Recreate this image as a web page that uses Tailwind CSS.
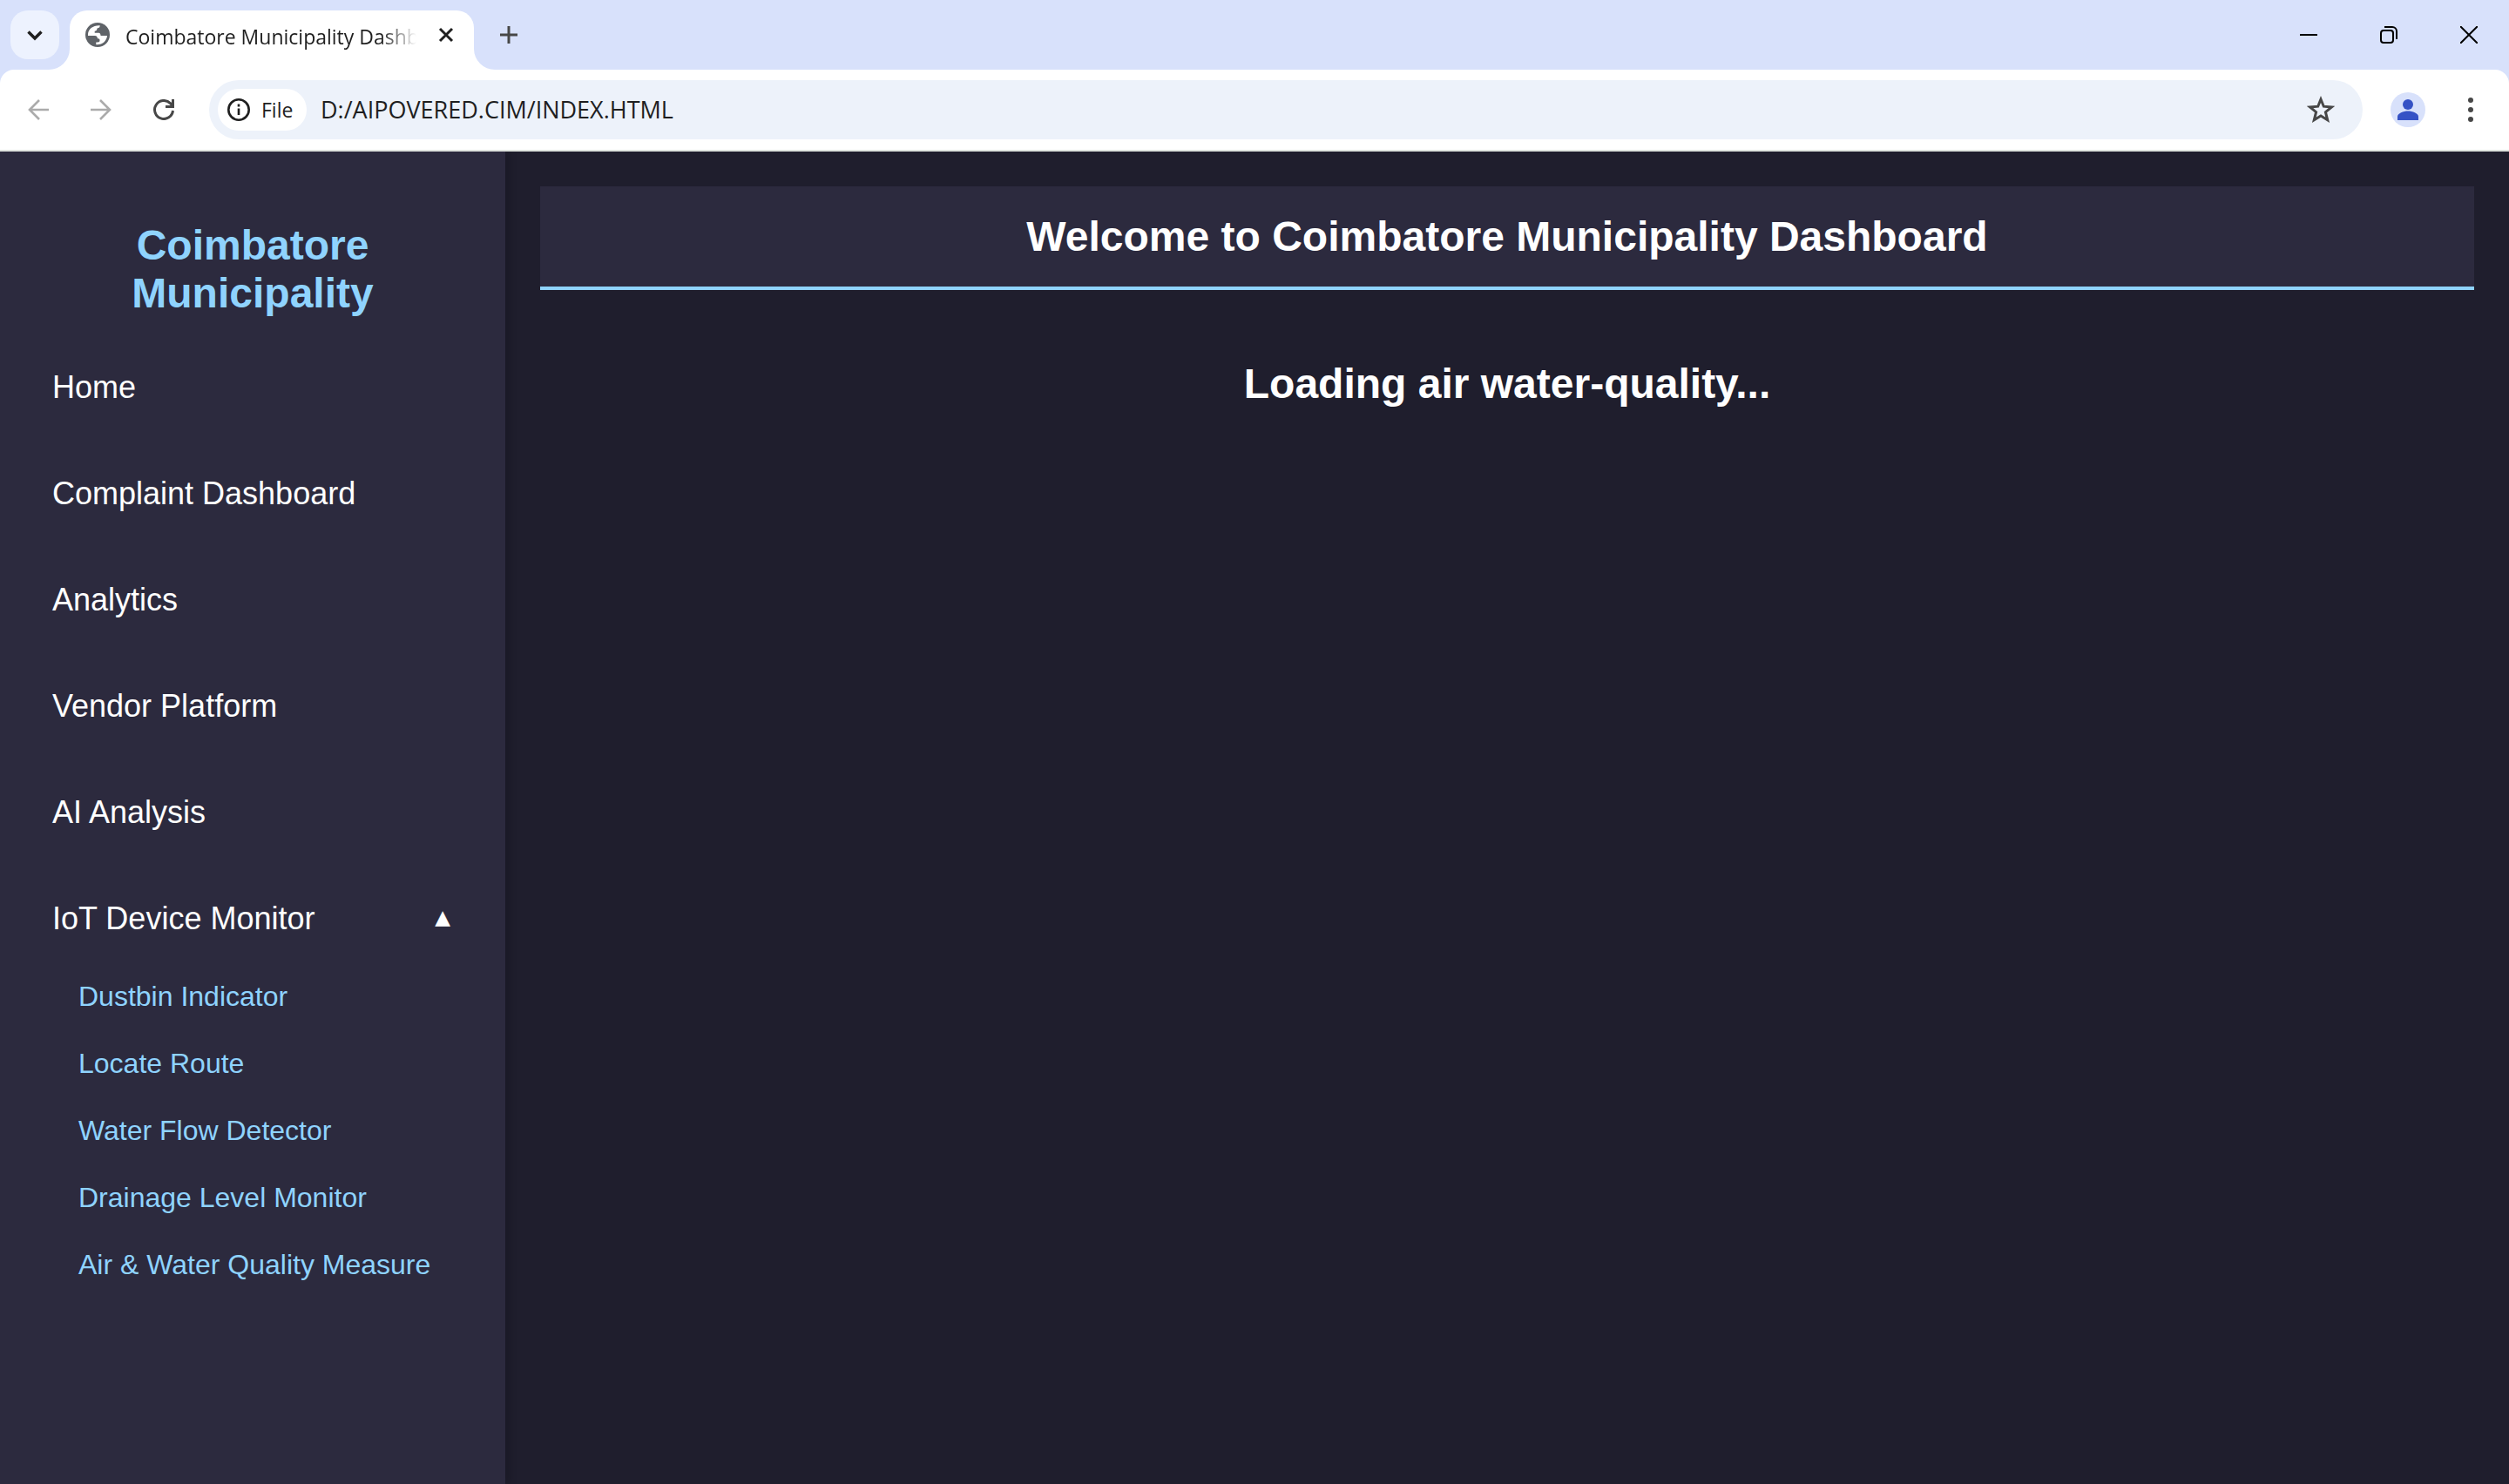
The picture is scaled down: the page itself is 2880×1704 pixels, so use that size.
<!DOCTYPE html>
<html lang="en">
<head>
<meta charset="utf-8">
<meta name="viewport" content="width=device-width, initial-scale=1">
<title>Coimbatore Municipality Dashboard</title>
<script src="https://cdn.jsdelivr.net/npm/@tailwindcss/browser@4"></script>
</head>
<body class="flex min-h-screen flex-col bg-[#1f1e2d] font-['Liberation_Sans',Arial,sans-serif] text-white">

<!-- Browser chrome -->
<div class="bg-[#d8e1fb] font-['Open_Sans','Segoe_UI',sans-serif] text-[#1f1f1f]">
  <div class="flex h-20 items-center pl-3">
    <button aria-label="Search tabs" class="flex size-14 items-center justify-center rounded-[20px] bg-[#edf2fe]">
      <svg class="size-6" viewBox="0 0 24 24" fill="none" stroke="currentColor" stroke-width="3.400"><path d="M4.500 8.500 12 16l7.500-7.500"/></svg>
    </button>
    <div class="relative ml-3 flex h-[68px] w-[464px] items-center self-end rounded-t-[20px] bg-white pr-4 pb-3 pl-4">
      <svg class="absolute bottom-0 -left-6 size-6" viewBox="0 0 24 24" fill="#fff"><path d="M24 0v24H0A24 24 0 0 0 24 0z"/></svg>
      <svg class="absolute -right-6 bottom-0 size-6" viewBox="0 0 24 24" fill="#fff"><path d="M0 0v24h24A24 24 0 0 1 0 0z"/></svg>
      <svg class="size-8 shrink-0" viewBox="0 0 32 32"><circle cx="16" cy="16" r="14" fill="#5f6368"/><path fill="#fff" d="M5 15C5.500 9.500 10.500 5 18.700 5.300c0 1.700-.7 2.500-1.700 2.700-1.200.2-1.700.6-1.700 1.600 0 1.400-1 2-2.600 2.200v2h4.600c1.500 0 2 1.200 2.300 3.200H27c-.4 5.500-5 10.700-12.700 10.300v-2.800h2c1.600 0 2.200-.8 2.200-2.200s-.8-2-2.500-2c-.2-1.800-1-3.300-3-3.300H5z"/></svg>
      <span class="ml-4 w-[334px] overflow-hidden pt-[3px] text-[23px] leading-8 whitespace-nowrap [mask-image:linear-gradient(to_right,#000_88%,transparent)]">Coimbatore Municipality Dashboard</span>
      <button aria-label="Close tab" class="ml-auto flex size-8 items-center justify-center">
        <svg class="size-5" viewBox="0 0 20 20" fill="none" stroke="currentColor" stroke-width="3"><path d="m3 3 14 14M17 3 3 17"/></svg>
      </button>
    </div>
    <button aria-label="New tab" class="ml-6 flex size-8 items-center justify-center text-[#474747]">
      <svg class="size-5" viewBox="0 0 20 20" fill="none" stroke="currentColor" stroke-width="3"><path d="M10 0v20M0 10h20"/></svg>
    </button>
    <div class="ml-auto flex items-center text-black">
      <button aria-label="Minimize" class="flex h-20 w-[92px] items-center justify-center"><svg class="size-5" viewBox="0 0 20 20" fill="none" stroke="currentColor" stroke-width="2"><path d="M0 10h20"/></svg></button>
      <button aria-label="Restore" class="flex h-20 w-[92px] items-center justify-center"><svg class="size-5" viewBox="0 0 20 20" fill="none" stroke="currentColor" stroke-width="2"><rect x="1" y="5" width="14" height="14" rx="3"/><path d="M5 1h9a5 5 0 0 1 5 5v9"/></svg></button>
      <button aria-label="Close" class="flex h-20 w-[92px] items-center justify-center"><svg class="size-5" viewBox="0 0 20 20" fill="none" stroke="currentColor" stroke-width="2"><path d="m0 0 20 20M20 0 0 20"/></svg></button>
    </div>
  </div>

  <div class="flex h-[94px] items-center rounded-t-2xl border-b-2 border-[#e0e4df] bg-white pr-7 pl-7">
    <button aria-label="Back" class="flex size-8 items-center justify-center text-[#ababab]"><svg class="size-6" viewBox="0 0 24 24" fill="none" stroke="currentColor" stroke-width="2.600"><path d="M24 12H2M13 1 2 12l11 11"/></svg></button>
    <button aria-label="Forward" class="ml-10 flex size-8 items-center justify-center text-[#ababab]"><svg class="size-6" viewBox="0 0 24 24" fill="none" stroke="currentColor" stroke-width="2.600"><path d="M0 12h22M11 1l11 11-11 11"/></svg></button>
    <button aria-label="Reload" class="ml-10 flex size-8 items-center justify-center text-[#474747]"><svg class="size-6" viewBox="0 0 24 24" fill="none" stroke="currentColor" stroke-width="3"><path d="M22.500 13A10.500 10.500 0 1 1 19.500 4.600L22 7.500"/><path d="M22.500 0v8.500H14"/></svg></button>
    <div class="ml-9 flex h-[68px] min-w-0 flex-1 items-center rounded-full bg-[#edf2fa] pr-8 pl-[10px]">
      <button class="flex h-12 w-[102px] shrink-0 items-center gap-3 rounded-full bg-white pl-[10px] text-[23px] font-medium">
        <svg class="size-7 shrink-0" viewBox="0 0 28 28" fill="none" stroke="currentColor" stroke-width="2.600"><circle cx="14" cy="14" r="11.700"/><path d="M14 12.500V20M14 7.500v3"/></svg>File
      </button>
      <input aria-label="Address" value="D:/AIPOVERED.CIM/INDEX.HTML" class="ml-4 min-w-0 flex-1 bg-transparent text-[27px] outline-none">
      <button aria-label="Bookmark this tab" class="text-[#474747]"><svg class="size-8" viewBox="0 0 32 32" fill="none" stroke="currentColor" stroke-width="3"><path d="m16 4 3.300 8.200 9.200.7-7.100 5.800 2.300 9L16 23l-7.700 4.700 2.300-9-7.100-5.800 9.200-.7z"/></svg></button>
    </div>
    <button aria-label="Profile" class="ml-8 size-10 overflow-hidden rounded-full bg-[#d8e1fb]"><svg class="size-10" viewBox="0 0 40 40" fill="#3552c5"><circle cx="20" cy="14" r="6"/><path d="M8 32v-4c0-4 7-6.500 12-6.500S32 24 32 28v4z"/></svg></button>
    <button aria-label="Menu" class="ml-9 flex size-8 items-center justify-center text-[#474747]"><svg class="size-8" viewBox="0 0 32 32" fill="currentColor"><circle cx="16" cy="5" r="3"/><circle cx="16" cy="16" r="3"/><circle cx="16" cy="27" r="3"/></svg></button>
  </div>
</div>

<!-- Page -->
<div class="flex flex-1 overflow-clip">
  <aside class="w-[580px] shrink-0 bg-[#2c2a3e] px-10 pt-20 shadow-[4px_0_10px_rgba(0,0,0,0.2)]">
    <h2 class="mx-auto w-[300px] text-center text-5xl leading-[55px] font-bold text-[#8fd3fe]">Coimbatore Municipality</h2>
    <nav class="mt-10 text-4xl leading-[42px]">
      <ul class="flex flex-col gap-10">
        <li><a href="#" class="block p-5">Home</a></li>
        <li><a href="#" class="block p-5">Complaint Dashboard</a></li>
        <li><a href="#" class="block p-5">Analytics</a></li>
        <li><a href="#" class="block p-5">Vendor Platform</a></li>
        <li><a href="#" class="block p-5">AI Analysis</a></li>
        <li>
          <button aria-expanded="true" class="flex w-full items-center justify-between p-5 text-left">IoT Device Monitor <span class="pr-[3px] pb-1 font-['DejaVu_Sans',sans-serif] text-[23px] leading-8">▲</span></button>
          <ul class="mt-[10px] pl-[30px] text-[32px] leading-[37px] text-[#8fd3fe]">
            <li><a href="#" class="block p-5">Dustbin Indicator</a></li>
            <li><a href="#" class="block p-5">Locate Route</a></li>
            <li><a href="#" class="block p-5">Water Flow Detector</a></li>
            <li><a href="#" class="block p-5">Drainage Level Monitor</a></li>
            <li><a href="#" class="block p-5 whitespace-nowrap">Air &amp; Water Quality Measure</a></li>
          </ul>
        </li>
      </ul>
    </nav>
  </aside>
  <main class="min-w-0 flex-1 p-10 text-center text-5xl leading-[55px] font-bold">
    <header class="border-b-4 border-[#8fd3fe] bg-[#2c2a3e] p-[30px]"><h1>Welcome to Coimbatore Municipality Dashboard</h1></header>
    <h2 class="mt-20">Loading air water-quality...</h2>
  </main>
</div>
</body>
</html>
